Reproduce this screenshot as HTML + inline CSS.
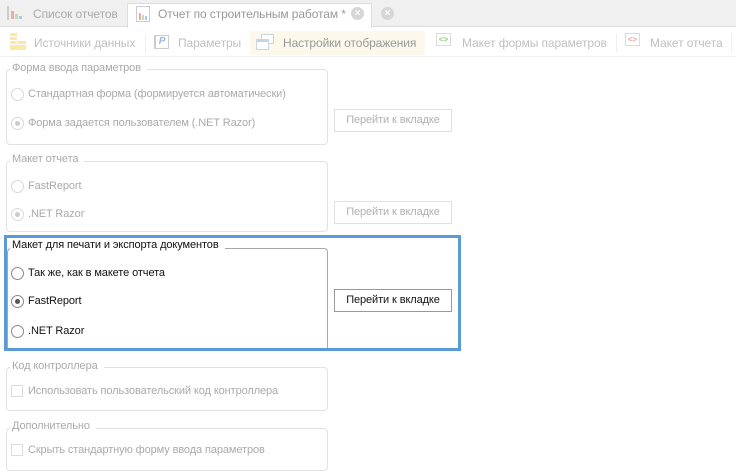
<!DOCTYPE html>
<html><head><meta charset="utf-8"><style>
*{box-sizing:border-box;margin:0;padding:0}
body{width:736px;height:475px;background:#fff;font-family:"Liberation Sans",sans-serif;font-size:11px;letter-spacing:-0.1px;position:relative;overflow:hidden;color:#aaa}
.a{position:absolute;white-space:nowrap}
.grp{position:absolute;border:1px solid #e2e2e2;border-radius:4px}
.lg{position:absolute;background:#fff;padding:0 6px 0 2px;line-height:13px}
.rb{position:absolute;width:13px;height:13px;border:1px solid #d8d8d8;border-radius:50%;background:#fff}
.rb.on::after{content:"";position:absolute;left:3px;top:3px;width:5px;height:5px;border-radius:50%;background:#ccc}
.cb{position:absolute;width:12px;height:12px;border:1px solid #dcdcdc;background:#fff}
.btn{position:absolute;border:1px solid #e0e0e0;background:#fff;text-align:center;line-height:20px;color:#b0b0b0}
.d{color:#111}
.x{position:absolute;width:13px;height:13px;border-radius:50%;background:#d6d6d6;color:#fff;font-size:10px;font-weight:bold;line-height:13px;text-align:center}
</style></head><body>
<div class="a" style="left:0;top:0;width:736px;height:27px;background:#f0f0f0;border-bottom:1px solid #ddd"></div>
<svg class="a" style="left:7px;top:5px" width="16" height="16"><rect x="0" y="1" width="2" height="14" fill="#ccc"/><rect x="4" y="6" width="3" height="8" fill="#f4a9a0"/><rect x="8" y="9" width="3" height="5" fill="#b9e0b0"/><rect x="12" y="11" width="3" height="3" fill="#a9c8ee"/></svg>
<div class="a" style="left:33px;top:7px;font-size:12px;color:#aaa">Список отчетов</div>
<div class="a" style="left:127px;top:3px;width:245px;height:25px;background:#fff;border:1px solid #ddd;border-bottom:none"></div>
<svg class="a" style="left:136px;top:6px" width="14" height="16"><rect x="0.5" y="0.5" width="13" height="15" fill="#fff" stroke="#ccc"/><rect x="3" y="7" width="2" height="7" fill="#f4a9a0"/><rect x="6" y="9" width="2" height="5" fill="#b9e0b0"/><rect x="9" y="10" width="2" height="4" fill="#a9c8ee"/></svg>
<div class="a" style="left:158px;top:7px;font-size:12px;color:#999">Отчет по строительным работам *</div>
<div class="x" style="left:351px;top:7px">×</div>
<div class="x" style="left:381px;top:7px">×</div>
<div class="a" style="left:0;top:56px;width:736px;height:1px;background:#f0f0f0"></div>
<div class="a" style="left:250px;top:31px;width:175px;height:24px;background:#fdf8ec"></div>
<svg class="a" style="left:10px;top:33px" width="16" height="18"><g fill="#fbe9a6"><rect x="0" y="0" width="7" height="3"/><rect x="0" y="4" width="7" height="3"/><rect x="0" y="8" width="7" height="3"/><rect x="0" y="12" width="16" height="3"/><rect x="8" y="8" width="8" height="3"/><rect x="0" y="15" width="16" height="2"/></g></svg>
<div class="a" style="left:34px;top:36px;font-size:12px;color:#c0c0c0">Источники данных</div>
<div class="a" style="left:145px;top:34px;width:1px;height:18px;background:#eee"></div>
<div class="a" style="left:154px;top:35px;width:15px;height:14px;border:1px solid #ccc;border-left-width:2px;color:#9bb7e0;font-size:10px;font-weight:bold;font-style:italic;line-height:12px;text-align:center">P</div>
<div class="a" style="left:178px;top:36px;font-size:12px;color:#c0c0c0">Параметры</div>
<svg class="a" style="left:256px;top:34px" width="18" height="16"><rect x="5.5" y="0.5" width="12" height="9" fill="#fff" stroke="#c8d4e8"/><rect x="0.5" y="5.5" width="12" height="10" fill="#fff" stroke="#c8d4e8"/><rect x="1" y="6" width="11" height="2" fill="#c8d4e8"/></svg>
<div class="a" style="left:283px;top:36px;font-size:12px;color:#999">Настройки отображения</div>
<div class="a" style="left:436px;top:33px;width:15px;height:13px;border:1px solid #dcdcdc;color:#8fcf7f;font-size:8px;line-height:11px;text-align:center;font-weight:bold">&lt;&gt;</div>
<div class="a" style="left:462px;top:36px;font-size:12px;color:#c0c0c0">Макет формы параметров</div>
<div class="a" style="left:616px;top:34px;width:1px;height:18px;background:#eee"></div>
<div class="a" style="left:625px;top:33px;width:15px;height:13px;border:1px solid #dcdcdc;color:#f0a0a0;font-size:8px;line-height:11px;text-align:center;font-weight:bold">&lt;&gt;</div>
<div class="a" style="left:650px;top:36px;font-size:12px;color:#c0c0c0">Макет отчета</div>
<div class="a" style="left:731px;top:34px;width:1px;height:18px;background:#eee"></div>

<div class="grp" style="left:6px;top:69px;width:322px;height:76px"></div>
<div class="lg" style="left:10px;top:62px">Форма ввода параметров</div>
<div class="rb" style="left:11px;top:88px"></div><div class="a" style="left:28px;top:88px">Стандартная форма (формируется автоматически)</div>
<div class="rb on" style="left:11px;top:117px"></div><div class="a" style="left:28px;top:117px">Форма задается пользователем (.NET Razor)</div>
<div class="btn" style="left:334px;top:109px;width:118px;height:23px">Перейти к вкладке</div>
<div class="grp" style="left:6px;top:161px;width:322px;height:71px"></div>
<div class="lg" style="left:10px;top:153px">Макет отчета</div>
<div class="rb" style="left:11px;top:180px"></div><div class="a" style="left:28px;top:180px">FastReport</div>
<div class="rb on" style="left:11px;top:208px"></div><div class="a" style="left:28px;top:208px">.NET Razor</div>
<div class="btn" style="left:334px;top:201px;width:118px;height:23px">Перейти к вкладке</div>
<div class="a" style="left:4px;top:235px;width:457px;height:116px;border:3px solid #5b9bd5"></div>
<div class="a" style="left:7px;top:248px;width:321px;height:100px;border:1px solid #a8a8a8;border-bottom:none;border-radius:4px 4px 0 0"></div>
<div class="lg d" style="left:10px;top:239px">Макет для печати и экспорта документов</div>
<div class="rb" style="left:11px;top:267px;border-color:#888"></div><div class="a d" style="left:28px;top:267px">Так же, как в макете отчета</div>
<div class="rb" style="left:11px;top:295px;border-color:#888"></div><div class="a" style="left:15px;top:299px;width:5px;height:5px;border-radius:50%;background:#555"></div><div class="a d" style="left:28px;top:295px">FastReport</div>
<div class="rb" style="left:11px;top:325px;border-color:#888"></div><div class="a d" style="left:28px;top:325px">.NET Razor</div>
<div class="btn d" style="left:334px;top:289px;width:118px;height:23px;border-color:#999;color:#111">Перейти к вкладке</div>
<div class="grp" style="left:6px;top:367px;width:322px;height:44px"></div>
<div class="lg" style="left:10px;top:360px">Код контроллера</div>
<div class="cb" style="left:11px;top:385px"></div><div class="a" style="left:28px;top:385px">Использовать пользовательский код контроллера</div>
<div class="grp" style="left:6px;top:428px;width:322px;height:43px"></div>
<div class="lg" style="left:10px;top:420px">Дополнительно</div>
<div class="cb" style="left:11px;top:444px"></div><div class="a" style="left:28px;top:444px">Скрыть стандартную форму ввода параметров</div>
</body></html>
